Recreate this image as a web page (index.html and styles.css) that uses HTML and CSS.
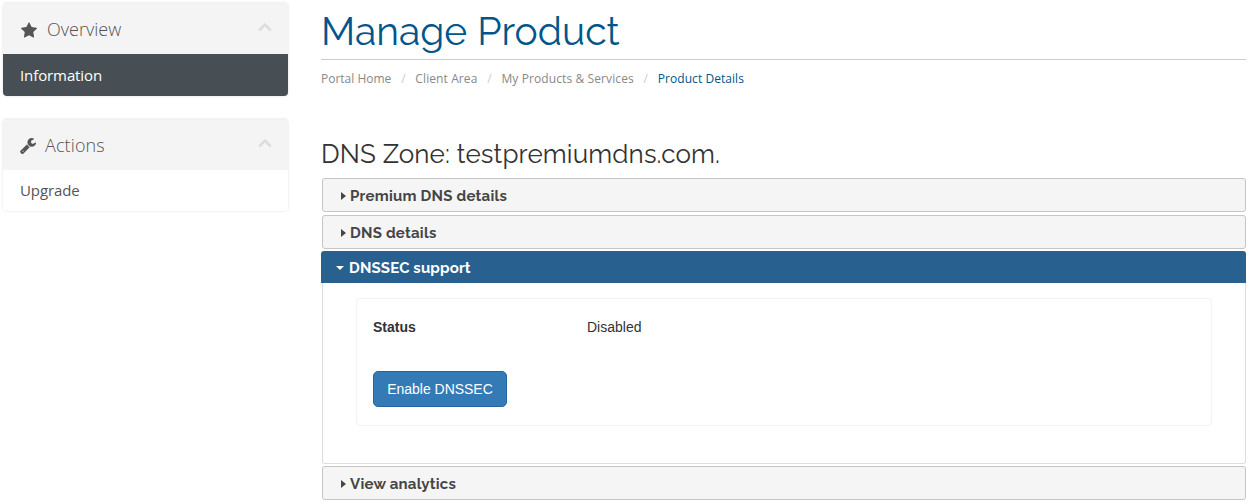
FILE: index.html
```html
<!DOCTYPE html>
<html lang="en">
<head>
<meta charset="utf-8">
<title>Manage Product</title>
<link rel="stylesheet" href="styles.css">
</head>
<body>
<div class="layout">
  <aside class="sidebar">
    <section class="panel">
      <div class="panel-head">
        <svg class="icon star" viewBox="0 0 1664 1600"><path d="M1664 615q0 22-26 48l-363 354 86 500q1 7 1 20 0 21-10.500 35.500t-30.500 14.500q-19 0-40-12l-449-236-449 236q-22 12-40 12-21 0-31.500-14.500t-10.500-35.500q0-6 2-20l86-500-364-354q-25-27-25-48 0-37 56-46l502-73 225-455q19-41 49-41t49 41l225 455 502 73q56 9 56 46z"/></svg>
        <span class="panel-title">Overview</span>
        <svg class="chevron" viewBox="0 0 14 9"><path d="M1.200 7.500 7 1.700l5.800 5.800"/></svg>
      </div>
      <a class="item active">Information</a>
    </section>
    <section class="panel">
      <div class="panel-head">
        <svg class="icon wrench" viewBox="0 0 1641 1643"><path d="M384 1451q0-26-19-45t-45-19-45 19-19 45 19 45 45 19 45-19 19-45zm644-420l-682 682q-37 37-90 37-52 0-91-37l-106-108q-38-36-38-90 0-53 38-91l681-681q39 98 114.500 173.500t173.500 114.500zm634-435q0 39-23 106-47 134-164.500 217.500t-258.500 83.500q-185 0-316.500-131.500t-131.500-316.500 131.500-316.500 316.500-131.500q58 0 121.500 16.500t107.500 46.500q16 11 16 28t-16 28l-293 169v224l193 107q5-3 79-48.500t135.500-81 70.500-35.500q15 0 23.500 10t8.500 25z" transform="translate(-10 -107)"/></svg>
        <span class="panel-title actions">Actions</span>
        <svg class="chevron" viewBox="0 0 14 9"><path d="M1.200 7.500 7 1.700l5.800 5.800"/></svg>
      </div>
      <a class="item upgrade">Upgrade</a>
    </section>
  </aside>
  <main class="main">
    <h1 class="title">Manage Product</h1>
    <nav class="crumbs">
      <a>Portal Home</a><i>/</i><a class="spaced">Client Area</a><i>/</i><a class="spaced">My Products &amp; Services</a><i>/</i><a class="current">Product Details</a>
    </nav>
    <h2 class="zone">DNS Zone: testpremiumdns.com.</h2>
    <div class="accordion">
      <h3 class="bar"><b class="arrow"></b>Premium DNS details</h3>
      <h3 class="bar"><b class="arrow"></b>DNS details</h3>
      <h3 class="bar open"><b class="arrow"></b>DNSSEC support</h3>
      <div class="content">
        <div class="box">
          <div class="row"><strong>Status</strong><span>Disabled</span></div>
          <button class="btn">Enable DNSSEC</button>
        </div>
      </div>
      <h3 class="bar"><b class="arrow"></b>View analytics</h3>
    </div>
  </main>
</div>
</body>
</html>
```
FILE: styles.css
```css
* { box-sizing: border-box; }
body { margin: 0; background: #fff; color: #333; font-family: "Open Sans", sans-serif; height: 504px; overflow: hidden; }
h1, h2, h3 { margin: 0; font-family: Raleway, Lato, sans-serif; font-weight: 400; }
.layout { display: flex; }
.sidebar { width: 321px; padding: 3px 33px 0 3px; flex: none; }
.panel { border-radius: 4px; box-shadow: 0 0 2px 1px #f0f0f0; overflow: hidden; margin-bottom: 23px; width: 285px; }
.panel-head { height: 51px; display: flex; align-items: center; background: #f4f4f4; padding: 0 16px 0 18px; border-top: 1px solid #f0f0f0; }
.panel-title { font-size: 18px; font-weight: 300; color: #555; line-height: 24px; }
.actions { letter-spacing: .12px; }
.icon { fill: #555; flex: none; }
.star { width: 16px; height: 16px; margin: 2px 10px 0 0; }
.wrench { width: 16px; height: 16px; margin: 2px 9px 0 -1px; }
.chevron { width: 14px; height: 9px; margin: 0 0 3px auto; fill: none; stroke: #ddd; stroke-width: 2.600; }
.item { display: block; height: 42px; line-height: 43px; padding-left: 17px; font-size: 15px; letter-spacing: -.1px; color: #555; background: #fff; }
.active { background: #474f54; color: #fff; }
.upgrade { height: 41px; line-height: 41px; }
.main { width: 925px; }
.title { height: 60px; border-bottom: 1px solid #ccc; color: #00568b; font-size: 39px; line-height: 62px; white-space: nowrap; }
.crumbs { display: flex; height: 36px; align-items: center; font-size: 12px; color: #888; white-space: nowrap; }
.crumbs i { font-style: normal; color: #ccc; width: 24px; text-align: center; }
.crumbs .spaced { letter-spacing: .1px; }
.crumbs .current { color: #00568b; letter-spacing: .05px; }
.zone { margin-top: 38px; height: 44px; font-size: 26px; line-height: 40px; letter-spacing: .14px; white-space: nowrap; }
.bar { height: 34px; margin: 0 0 3px 1px; border: 1px solid #c5c5c5; border-radius: 3px; background: #f5f5f5; display: flex; align-items: center; padding: 2px 0 0 18px; font-size: 15px; font-weight: 700; letter-spacing: .24px; color: #454545; white-space: nowrap; }
.arrow { border: 4px solid transparent; border-left: 5px solid #454545; border-right: 0; margin: -1px 4px 0 0; }
.open { height: 32px; margin: -1px 0 0; border: 0; border-radius: 3px 3px 0 0; background: #286090; color: #fff; padding-left: 15px; letter-spacing: .15px; }
.open .arrow { border: 4px solid transparent; border-top: 4px solid #fff; border-bottom: 0; margin: -1px 5px 0 0; }
.content { height: 181px; margin: 0 0 2px 1px; padding: 15px 33px 0; border: 1px solid #ddd; border-top: 0; border-radius: 0 0 3px 3px; font-family: "Liberation Sans", sans-serif; font-size: 14px; }
.box { height: 128px; border: 1px solid #f4f4f4; border-radius: 4px; padding: 18px 16px; }
.row { display: grid; grid-template-columns: 214px 1fr; line-height: 20px; height: 54px; }
.btn { display: block; width: 134px; height: 36px; padding: 0; border: 1px solid #2565a0; border-radius: 5px; background: #337ab7; color: #fff; font: 14px "Liberation Sans", sans-serif; letter-spacing: -.03px; }
```
